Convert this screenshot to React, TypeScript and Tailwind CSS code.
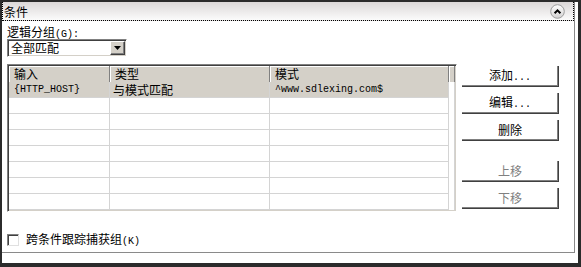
import React from "react";

const CJK = { fontFamily: "'Noto Sans CJK SC', 'Noto Sans', sans-serif" };
const MONO = { fontFamily: "'Liberation Mono', 'DejaVu Sans Mono', monospace" };

// half-width latin bits, 6px per char like the bitmap font
const Lat = ({ children }: { children: React.ReactNode }) => (
  <span className="text-[10px] leading-none" style={MONO}>
    {children}
  </span>
);

const cols = ["w-[101px]", "w-[160px]", "w-[179px]", "w-[6px]"];

const rows = [
  ["{HTTP_HOST}", "与模式匹配", "^www.sdlexing.com$"],
  ["", "", ""],
  ["", "", ""],
  ["", "", ""],
  ["", "", ""],
  ["", "", ""],
  ["", "", ""],
  ["", "", ""],
];

function Btn({ label, dots, disabled }: { label: string; dots?: boolean; disabled?: boolean }) {
  return (
    <div
      className={`h-[21px] w-[97px] bg-white border-r border-b border-[#404040] shadow-[inset_-1px_-1px_0_#808080] flex items-center justify-center ${
        disabled ? "text-[#808080]" : "text-black"
      }`}
    >
      <span className="text-[12px] leading-[12px]">
        {label}
        {dots && <Lat>...</Lat>}
      </span>
    </div>
  );
}

export default function App() {
  return (
    <div className="w-[581px] h-[267px] bg-[#2b2b2b] pt-[2px] pl-[2px] pr-[3px] pb-[4px]" style={CJK}>
      <div className="h-full bg-white">
        <div className="w-[573px] h-[251px] border-r border-b border-[#8a8a8a] flex flex-col">
          {/* header band */}
          <div className="h-[19px] shrink-0 flex items-center justify-between border-l border-r border-b border-dotted border-black bg-gradient-to-b from-[#dcd8d8] to-[#fbfbfb]">
            <span className="pl-[1px] pt-[2px] text-[12px] leading-[12px] text-black">条件</span>
            <svg width="15" height="15" viewBox="0 0 15 15" className="mr-[8px]">
              <defs>
                <linearGradient id="cg" x1="0" y1="0" x2="0" y2="1">
                  <stop offset="0" stopColor="#ffffff" />
                  <stop offset="1" stopColor="#d2d0d0" />
                </linearGradient>
              </defs>
              <circle cx="7.5" cy="7.5" r="6.8" fill="url(#cg)" stroke="#9c9c9c" strokeWidth="1" />
              <path d="M4.6 9.2 L7.5 6.3 L10.4 9.2" fill="none" stroke="#000" strokeWidth="2" />
            </svg>
          </div>

          <div className="pl-[5px] flex flex-col">
            <div className="pt-[3px] h-[18px] shrink-0 text-[12px] leading-[15px] text-black">
              逻辑分组<Lat>(G):</Lat>
            </div>

            {/* combo */}
            <div className="w-[120px] h-[18px] shrink-0 border-t border-l border-[#808080] border-b border-r border-b-white border-r-white shadow-[inset_1px_1px_0_#404040,inset_-1px_-1px_0_#d4d0c8] flex items-center justify-between bg-white">
              <span className="pl-[3px] text-[12px] leading-none text-black">全部匹配</span>
              <div className="mr-[1px] w-[15px] h-[14px] bg-[#d4d0c8] border-t border-l border-white border-b border-r border-b-[#404040] border-r-[#404040] shadow-[inset_-1px_-1px_0_#808080] flex items-center justify-center">
                <svg width="7" height="4" viewBox="0 0 7 4">
                  <path d="M0 0 H7 L3.5 4 Z" fill="#000" />
                </svg>
              </div>
            </div>

            {/* list + buttons */}
            <div className="mt-[7px] flex shrink-0 h-[148px]">
              <div className="w-[450px] h-[148px] border-t border-l border-[#808080] border-b border-r border-b-white border-r-white shadow-[inset_1px_1px_0_#404040,inset_-1px_-1px_0_#d4d0c8] p-[1px] flex flex-col">
                <div className="flex h-[16px] shrink-0 bg-[#d4d0c8] text-[12px] leading-[16px] text-black">
                  {["输入", "类型", "模式", ""].map((h, i) => (
                    <div
                      key={i}
                      className={`${cols[i]} h-full border-r border-[#808080] shadow-[inset_1px_1px_0_#ffffff] pl-[5px] overflow-hidden`}
                    >
                      {h}
                    </div>
                  ))}
                </div>
                <div className="flex flex-col">
                  {rows.map((r, ri) => (
                    <div key={ri} className="flex h-[16px] shrink-0">
                      {r.map((c, ci) => (
                        <div
                          key={ci}
                          className={`${cols[ci]} h-full border-r border-b border-[#d4d4d4] ${
                            ri === 0 ? "bg-[#d4d0c8]" : ""
                          } flex items-center overflow-hidden whitespace-nowrap ${
                            ci === 1 ? "pl-[3px] text-[12px] leading-none" : "pl-[5px] pt-[1px]"
                          }`}
                        >
                          {ci === 1 ? c : <Lat>{c}</Lat>}
                        </div>
                      ))}
                      <div className={`${cols[3]} h-full border-r border-[#d4d4d4]`} />
                    </div>
                  ))}
                </div>
              </div>

              <div className="ml-[5px] pt-[2px] flex flex-col gap-[6px]">
                <Btn label="添加" dots />
                <Btn label="编辑" dots />
                <Btn label="删除" />
                <div className="h-[8px]" />
                <Btn label="上移" disabled />
                <Btn label="下移" disabled />
              </div>
            </div>

            {/* checkbox */}
            <div className="mt-[21px] flex items-center gap-[7px]">
              <div className="w-[12px] h-[12px] border-t border-l border-[#808080] border-b border-r border-b-[#e0e0e0] border-r-[#e0e0e0] shadow-[inset_1px_1px_0_#404040] bg-white" />
              <span className="text-[12px] leading-[12px] text-black">
                跨条件跟踪捕获组<Lat>(K)</Lat>
              </span>
            </div>
          </div>
        </div>
      </div>
    </div>
  );
}
